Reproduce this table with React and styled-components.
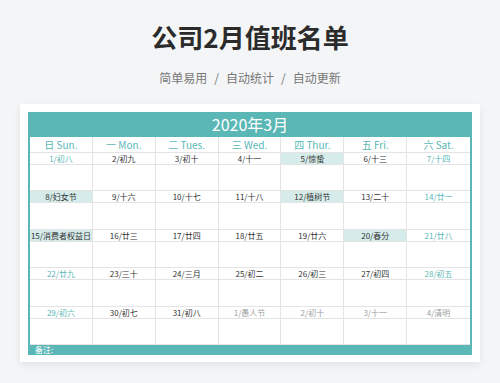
import React from "react";
import styled, { createGlobalStyle } from "styled-components";

const TEAL = "#5bb7b5";

const GlobalStyle = createGlobalStyle`
  html, body {
    margin: 0;
    padding: 0;
    background: #f4f5f6;
  }
  body {
    font-family: "Noto Sans CJK SC", "Noto Sans", sans-serif;
  }
`;

const Page = styled.div`
  width: 500px;
  height: 383px;
  overflow: hidden;
  background: #f4f5f6;
  padding-top: 22px;
  box-sizing: border-box;
`;

const Title = styled.h1`
  margin: 0;
  text-align: center;
  font-size: 26px;
  line-height: 30px;
  font-weight: 700;
  color: #2b2b2b;
`;

const Subtitle = styled.div`
  margin-top: 18px;
  text-align: center;
  font-size: 12px;
  line-height: 16px;
  color: #777;
`;

const Slash = styled.span`
  margin: 0 7px;
`;

const Card = styled.div`
  margin: 18px 20px 0;
  background: #fff;
  padding: 8px 8px 7px;
  box-shadow: 0 3px 8px rgba(0, 0, 0, 0.07);
`;

const Table = styled.div`
  border-left: 2px solid ${TEAL};
  border-right: 2px solid ${TEAL};
`;

const Banner = styled.div`
  height: 25px;
  background: ${TEAL};
  color: #fff;
  font-size: 16px;
  line-height: 25px;
  text-align: center;
`;

const Row = styled.div`
  display: grid;
  grid-template-columns: repeat(7, 1fr);
`;

const DayName = styled.div`
  height: 16px;
  line-height: 16px;
  font-size: 10px;
  color: ${TEAL};
  text-align: center;
  border-right: 1px solid #e4e4e4;
  border-bottom: 1px solid #e4e4e4;
  box-sizing: border-box;
  &:last-child {
    border-right: none;
  }
`;

const DateCell = styled.div`
  height: 12px;
  line-height: 12px;
  font-size: 8px;
  text-align: center;
  white-space: nowrap;
  box-sizing: border-box;
  border-right: 1px solid #e4e4e4;
  border-bottom: 1px solid #e4e4e4;
  background: ${(p) => (p.$mark ? "#d5ecea" : "#fff")};
  color: ${(p) =>
    p.$next ? "#a0a0a0" : p.$weekend && !p.$mark ? TEAL : "#333"};
  &:nth-child(7) {
    border-right: none;
  }
`;

const BlankCell = styled.div`
  height: 26.4px;
  box-sizing: border-box;
  border-right: 1px solid #e4e4e4;
  border-bottom: 1px solid #e4e4e4;
  &:nth-child(7) {
    border-right: none;
  }
`;

const Footer = styled.div`
  height: 10px;
  background: ${TEAL};
  color: #fff;
  font-size: 8px;
  line-height: 10px;
  padding-left: 5px;
`;

const days = ["日 Sun.", "一 Mon.", "二 Tues.", "三 Wed.", "四 Thur.", "五 Fri.", "六 Sat."];

const weeks = [
  [["1/初八"], ["2/初九"], ["3/初十"], ["4/十一"], ["5/惊蛰", "m"], ["6/十三"], ["7/十四"]],
  [["8/妇女节", "m"], ["9/十六"], ["10/十七"], ["11/十八"], ["12/植树节", "m"], ["13/二十"], ["14/廿一"]],
  [["15/消费者权益日", "m"], ["16/廿三"], ["17/廿四"], ["18/廿五"], ["19/廿六"], ["20/春分", "m"], ["21/廿八"]],
  [["22/廿九"], ["23/三十"], ["24/三月"], ["25/初二"], ["26/初三"], ["27/初四"], ["28/初五"]],
  [["29/初六"], ["30/初七"], ["31/初八"], ["1/愚人节", "n"], ["2/初十", "n"], ["3/十一", "n"], ["4/清明", "n"]],
];

const App = () => {
  return (
    <Page>
      <GlobalStyle />
      <Title>公司2月值班名单</Title>
      <Subtitle>
        简单易用<Slash>/</Slash>自动统计<Slash>/</Slash>自动更新
      </Subtitle>
      <Card>
        <Table>
          <Banner>2020年3月</Banner>
          <Row>
            {days.map((d) => (
              <DayName key={d}>{d}</DayName>
            ))}
          </Row>
          {weeks.map((week, w) => (
            <div key={w}>
              <Row>
                {week.map(([label, flag], i) => (
                  <DateCell
                    key={label}
                    $mark={flag === "m"}
                    $next={flag === "n"}
                    $weekend={i === 0 || i === 6}
                  >
                    {label}
                  </DateCell>
                ))}
              </Row>
              <Row>
                {week.map(([label]) => (
                  <BlankCell key={label} />
                ))}
              </Row>
            </div>
          ))}
          <Footer>备注:</Footer>
        </Table>
      </Card>
    </Page>
  );
};

export default App;
